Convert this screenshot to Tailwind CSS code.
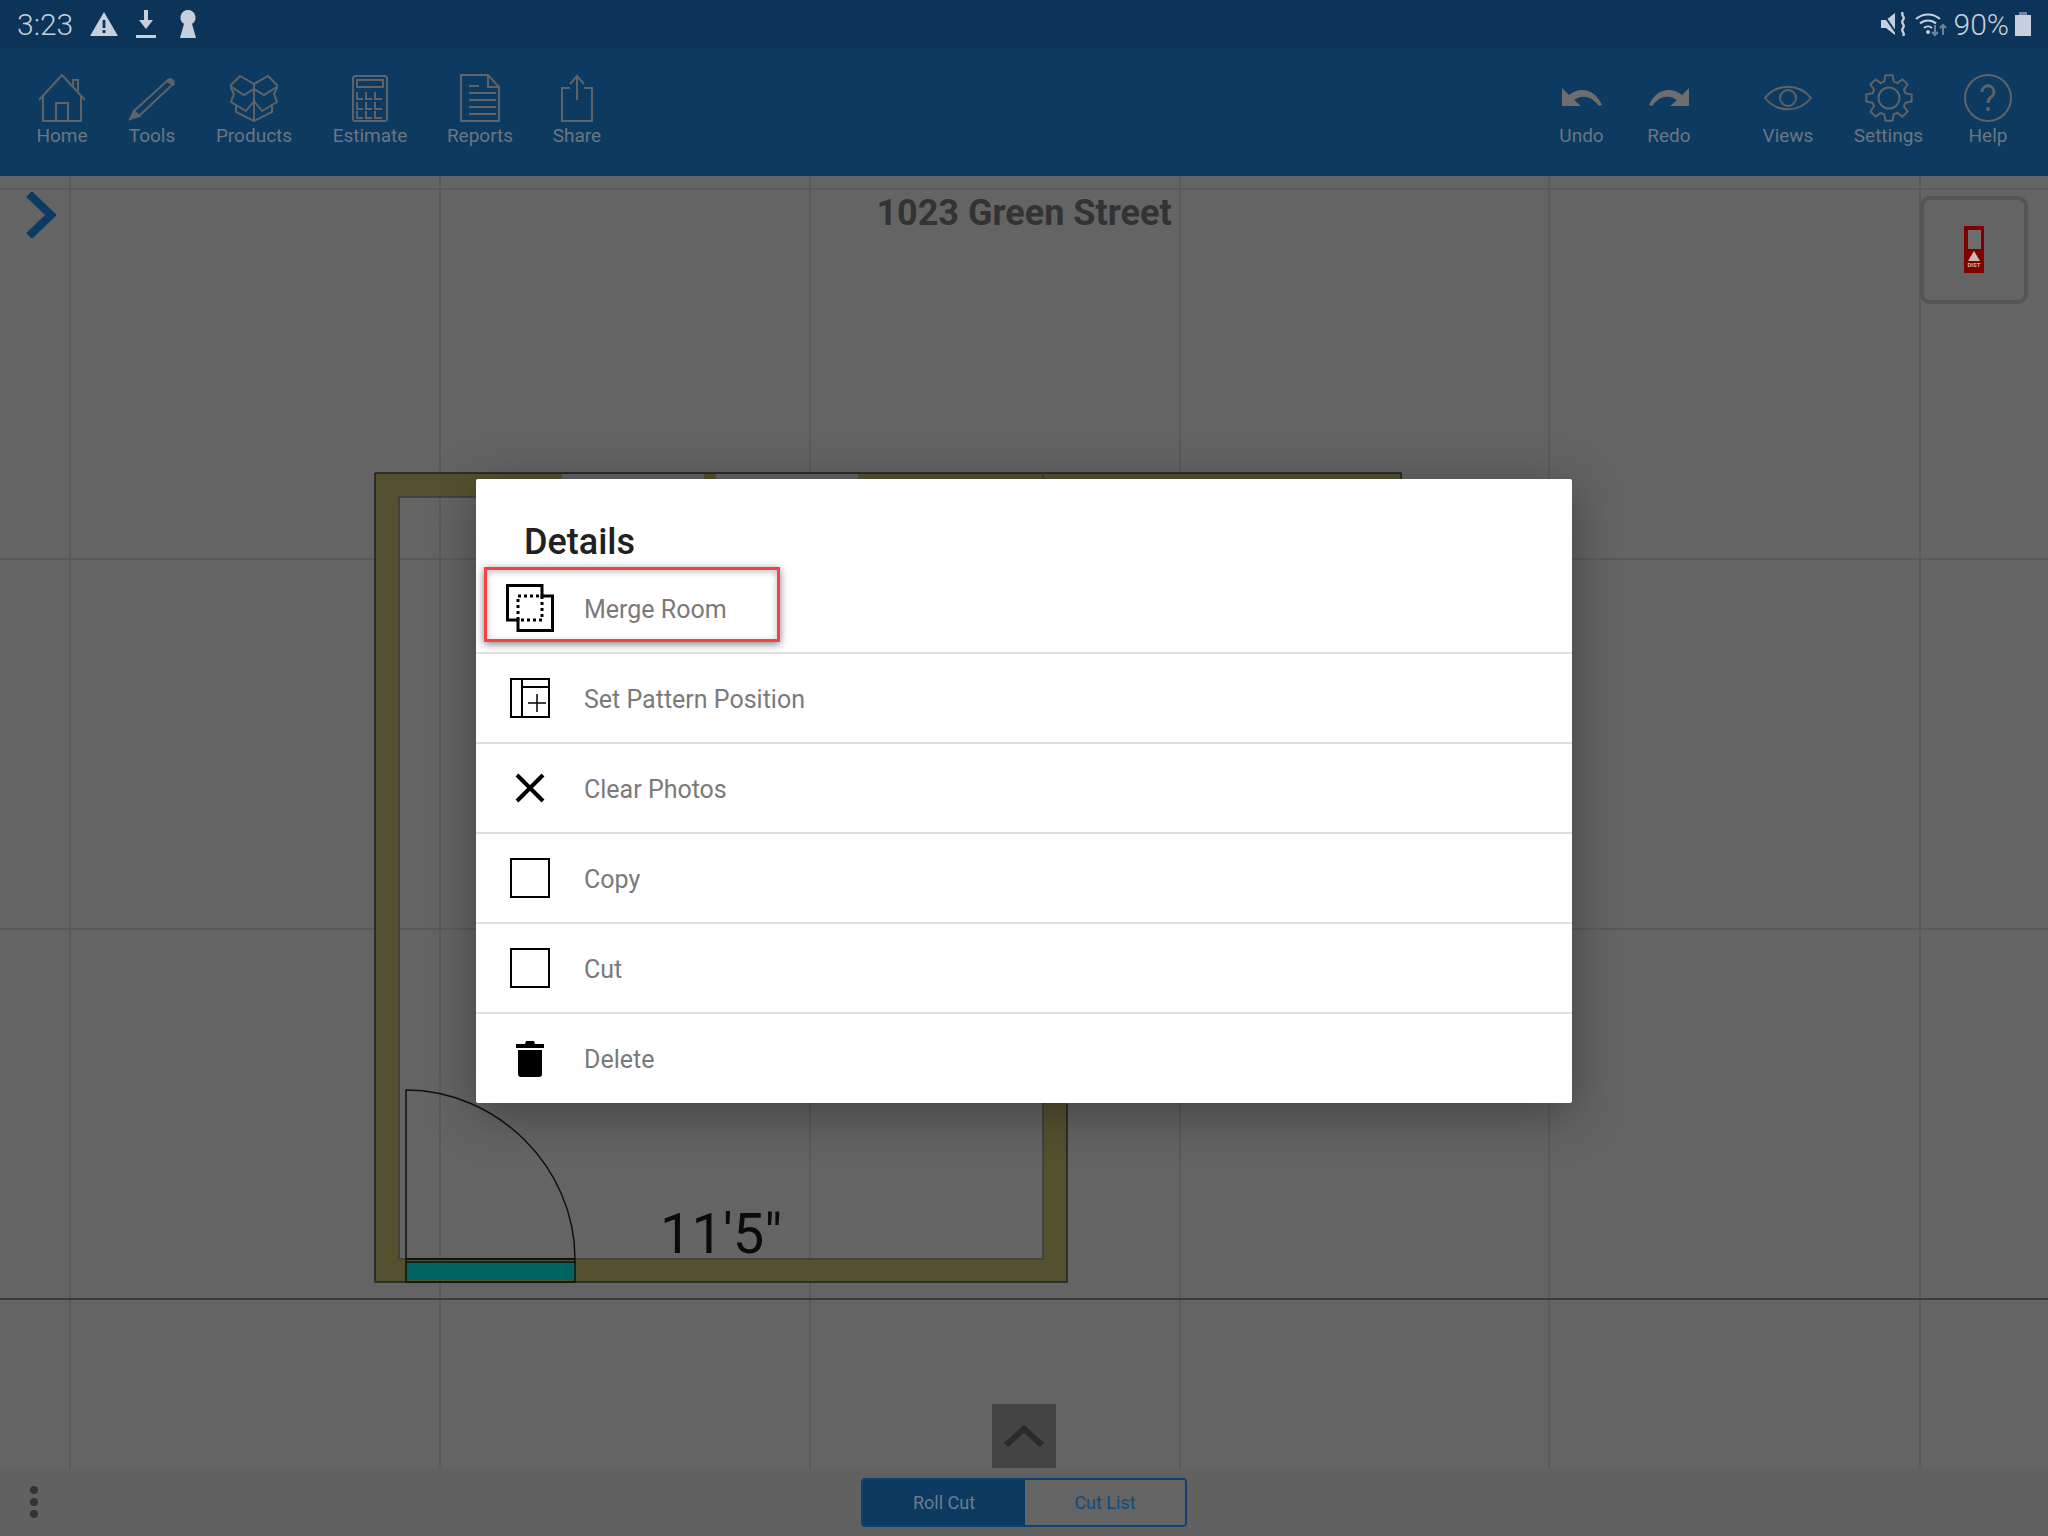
<!DOCTYPE html>
<html lang="en">
<head>
    <meta charset="UTF-8">
    <meta name="viewport" content="width=device-width, initial-scale=1.0">
    <title>1023 Green Street</title>
    <script src="https://cdn.jsdelivr.net/npm/@tailwindcss/browser@4"></script>
</head>
<body class="[font-family:Roboto,sans-serif] bg-[#646464]">
<div class="flex flex-col w-[2048px] h-[1536px] overflow-hidden">

    <!-- status bar -->
    <div class="h-[48px] shrink-0 bg-[#0c3358] flex items-center justify-between pl-[17px] pr-[17px] text-[#c5d0dc]">
        <div class="flex items-center">
            <span class="text-[30px] font-light w-[73px]">3:23</span>
            <svg class="w-[28px] h-[24px]" viewBox="0 0 28 24"><path fill-rule="evenodd" fill="#c5d0dc" d="M14 0 28 24H0ZM12.600 8v8h2.800V8ZM12.600 18v3h2.800v-3Z"/></svg>
            <svg class="w-[20px] h-[28px] ml-[18px]" viewBox="0 0 20 28"><path fill="#c5d0dc" d="M8 0h4v10h5l-7 9-7-9h5ZM0 25h20v3H0Z"/></svg>
            <svg class="w-[16px] h-[28px] ml-[24px]" viewBox="0 0 16 28"><path fill="#c5d0dc" d="M8 0a7.500 7.500 0 0 1 4 13.800L16 28H0L4 13.800A7.500 7.500 0 0 1 8 0Z"/></svg>
        </div>
        <div class="flex items-center">
            <svg class="w-[26px] h-[24px]" viewBox="0 0 26 24"><path fill="#c5d0dc" d="M0 8h5l9-7v22l-9-7H0Z"/><path fill="none" stroke="#0c3358" stroke-width="2" d="M2 2l14 20"/><path fill="none" stroke="#c5d0dc" stroke-width="2.400" d="M22 0c-3 3 3 5 0 8s3 5 0 8 3 5 0 8"/></svg>
            <svg class="w-[32px] h-[26px] ml-[8px]" viewBox="0 0 32 26"><g fill="none" stroke="#c5d0dc" stroke-width="2"><path d="M1 8a18 18 0 0 1 24 0"/><path d="M5 12.500a12 12 0 0 1 16 0"/><path d="M9 17a6 6 0 0 1 8 0"/></g><circle cx="13" cy="21" r="2" fill="#c5d0dc"/><path fill="none" stroke="#6f8299" stroke-width="2" d="M20 14v10m-3-3 3 3 3-3M28 24V14m-3 3 3-3 3 3"/></svg>
            <span class="text-[30px] font-light ml-[7px]">90%</span>
            <svg class="w-[16px] h-[24px] ml-[6px]" viewBox="0 0 16 24"><path fill="#c5d0dc" d="M0 3h16v21H0Z"/><path fill="#6f8299" d="M4 0h8v3H4Z"/></svg>
        </div>
    </div>

    <!-- toolbar -->
    <div class="h-[128px] shrink-0 bg-[#0c3a60] flex justify-between pt-[26px] pl-[17px] pr-[20px] text-[19px] leading-[24px] text-[#6c7580]">
        <div class="flex">
            <div class="flex flex-col items-center w-[90px]">
                <svg class="w-[48px] h-[48px]" viewBox="0 0 48 48" fill="none" stroke="#5f6266" stroke-width="2"><path d="M1 26 24 1l23 25M5 22v25h38V22"/><path d="M35 12V6h5v11"/><path d="M18 47V29h12v18"/></svg>
                <span class="mt-[2px]">Home</span>
            </div>
            <div class="flex flex-col items-center w-[90px]">
                <svg class="w-[48px] h-[48px]" viewBox="0 0 48 48" fill="none" stroke="#5f6266" stroke-width="2"><path d="M6 37 40 6l5 4-34 32Z"/><path fill="#5f6266" d="M6 37l5 5-9 3Z"/><path fill="#5f6266" d="M40 6a4 4 0 0 1 6 4l-1 1-6-4Z"/></svg>
                <span class="mt-[2px]">Tools</span>
            </div>
            <div class="flex flex-col items-center w-[114px]">
                <svg class="w-[48px] h-[48px]" viewBox="0 0 48 48" fill="none" stroke="#5f6266" stroke-width="2"><path d="M24 10 10 2 0 12l14 9 10-6 10 6 14-9L38 2Z"/><path d="M24 10v37M0 12l4 8-3 8 15 9 8-10 8 10 15-9-3-8 4-8"/><path d="M6 32v6l18 9 18-9v-6M24 27V15"/></svg>
                <span class="mt-[2px]">Products</span>
            </div>
            <div class="flex flex-col items-center w-[118px]">
                <svg class="w-[48px] h-[48px]" viewBox="0 0 48 48" fill="none" stroke="#5f6266" stroke-width="2"><rect x="7" y="2" width="34" height="45" rx="2.500"/><rect x="11" y="6" width="26" height="7"/><path d="M11 18v7h6M20 18v7h6M29 18v7h7M11 28v7h6M20 28v7h6M29 28v7h7M11 37v7h6M20 37v7h6M29 37v7h7"/></svg>
                <span class="mt-[2px]">Estimate</span>
            </div>
            <div class="flex flex-col items-center w-[102px]">
                <svg class="w-[48px] h-[48px]" viewBox="0 0 48 48" fill="none" stroke="#5f6266" stroke-width="2"><path d="M5 1h27l11 12v34H5ZM32 1v12h11"/><path d="M13 12h10M13 19h27M13 26h27M13 33h27M13 40h27"/></svg>
                <span class="mt-[2px]">Reports</span>
            </div>
            <div class="flex flex-col items-center w-[92px]">
                <svg class="w-[48px] h-[48px]" viewBox="0 0 48 48" fill="none" stroke="#5f6266" stroke-width="2"><path d="M17 14H9v33h30V14h-8"/><path d="M24 26V1m-7 9 7-8 7 8"/></svg>
                <span class="mt-[2px]">Share</span>
            </div>
        </div>
        <div class="flex">
            <div class="flex flex-col items-center w-[91px]">
                <svg class="w-[48px] h-[48px]" viewBox="0 0 48 48"><path fill="#6e6e6e" d="M4 14V32H23L16 26C24 20 34 22 41 32L44 31C37 15 22 12 11 21Z"/></svg>
                <span class="mt-[2px]">Undo</span>
            </div>
            <div class="flex flex-col items-center w-[84px] mr-[36px]">
                <svg class="w-[48px] h-[48px]" viewBox="0 0 48 48"><path fill="#6e6e6e" d="M44 14V32H25L32 26C24 20 14 22 7 32L4 31C11 15 26 12 37 21Z"/></svg>
                <span class="mt-[2px]">Redo</span>
            </div>
            <div class="flex flex-col items-center w-[82px]">
                <svg class="w-[48px] h-[48px]" viewBox="0 0 48 48" fill="none" stroke="#5f6266" stroke-width="2"><path d="M1 24C13 9 35 9 47 24 35 39 13 39 1 24Z"/><circle cx="24" cy="24" r="8"/></svg>
                <span class="mt-[2px]">Views</span>
            </div>
            <div class="flex flex-col items-center w-[119px]">
                <svg class="w-[48px] h-[48px]" viewBox="0 0 48 48" fill="none" stroke="#5f6266" stroke-width="2" stroke-linejoin="round"><circle cx="24" cy="24" r="10.500"/><path d="M19.310 7.660 20.400 1.280H27.600L28.690 7.660A17 17 0 0 1 32.240 9.130L37.520 5.390 42.610 10.480 38.870 15.760A17 17 0 0 1 40.340 19.310L46.720 20.400V27.600L40.340 28.690A17 17 0 0 1 38.870 32.240L42.610 37.520 37.520 42.610 32.240 38.870A17 17 0 0 1 28.690 40.340L27.600 46.720H20.400L19.310 40.340A17 17 0 0 1 15.760 38.870L10.480 42.610 5.390 37.520 9.130 32.240A17 17 0 0 1 7.660 28.690L1.280 27.600V20.400L7.660 19.310A17 17 0 0 1 9.130 15.760L5.390 10.480 10.480 5.390 15.760 9.130A17 17 0 0 1 19.310 7.660Z"/></svg>
                <span class="mt-[2px]">Settings</span>
            </div>
            <div class="flex flex-col items-center w-[80px]">
                <svg class="w-[48px] h-[48px]" viewBox="0 0 48 48" fill="none" stroke="#5f6266" stroke-width="2"><circle cx="24" cy="24" r="23"/><path stroke-width="3" d="M18 18a6 6 0 1 1 9 5c-2 1.500-3 3-3 6"/><path stroke-width="3" d="M24 33v4"/></svg>
                <span class="mt-[2px]">Help</span>
            </div>
        </div>
    </div>

    <!-- canvas -->
    <div class="relative flex-1">
        <svg class="absolute inset-0 w-full h-full" viewBox="0 176 2048 1292">
            <g stroke="#5a5a5a" stroke-width="2">
                <path d="M70 176v1292M440 176v1292M810 176v1292M1180 176v1292M1549 176v1292M1920 176v1292"/>
                <path d="M0 189h2048M0 559h2048M0 929h2048"/>
            </g>
            <path stroke="#3a3a3a" stroke-width="2" d="M0 1299h2048"/>

            <!-- walls -->
            <path fill="#55512f" d="M375 473H1401V497H1067V1282H375ZM399 497V1259H1043V497Z" fill-rule="evenodd"/>
            <path fill="#646464" d="M562 474h142v23H562ZM716 474h142v23H716Z"/>
            <g fill="none">
                <path stroke="#1f1f1f" stroke-width="1.500" d="M375 473H1401V497M375 473V1282H1067V1104"/>
                <path stroke="#3b3b3b" stroke-width="1.500" d="M1043 473V1259H399V497H480"/>
                <path stroke="#4f4b2c" stroke-width="1" d="M375 1282l24-23"/>
            </g>

            <!-- door -->
            <rect x="406" y="1262" width="169" height="18" fill="#006462"/>
            <g fill="none" stroke="#111" stroke-width="1.500">
                <path d="M406 1282V1090C497 1090 575 1167 575 1259V1282ZM406 1262H575"/>
            </g>
            <path stroke="#111" stroke-width="2" d="M406 1259H575"/>

            <text x="660" y="1253" font-size="56" fill="#0a0a0a" font-family="Roboto">11'5"</text>
        </svg>

        <!-- canvas overlays -->
        <svg class="absolute left-[26px] top-[16px] w-[30px] h-[46px]" viewBox="0 0 30 46"><path fill="none" stroke="#0c3a62" stroke-width="8" d="M3 2l22 21L3 44"/></svg>
        <div class="absolute inset-x-0 top-[17px] text-center text-[36px] leading-[40px] font-bold text-[#333333]">1023 Green Street</div>
        <div class="absolute right-[20px] top-[20px] w-[108px] h-[108px] flex items-center justify-center border-4 border-[#555555] rounded-[10px]">
            <div class="relative flex flex-col items-center w-[20px] h-[47px] bg-[#800000] pt-[4px] -mt-[2px]">
                <div class="w-[13px] h-[19px] bg-[#6e6e6e]"></div>
                <svg class="w-[12px] h-[10px] mt-[2px]" viewBox="0 0 12 10"><path fill="#c9b9b9" d="M6 0l6 10H0Z"/></svg>
                <span class="text-[6px] leading-[8px] font-bold text-[#c9b9b9]">DIST</span>
            </div>
        </div>

        <!-- details dialog -->
        <div class="absolute left-[476px] top-[303px] w-[1096px] bg-white rounded-[2px] shadow-[0_10px_50px_rgba(0,0,0,0.35)]">
            <div class="h-[85px] pl-[48px] pt-[43px] text-[36px] leading-[40px] font-medium text-[#212121]">Details</div>
            <div class="relative flex items-center h-[90px] border-b-2 border-[#e0e0e0]">
                <svg class="w-[48px] h-[48px] ml-[30px]" viewBox="0 0 48 48" fill="none" stroke="#000"><path stroke-width="3" d="M36 12V1.500H1.500V36H12v10.500h34.500V12Z"/><path stroke-width="3" stroke-dasharray="3 3" d="M12 12h24v24H12Z"/></svg>
                <span class="ml-[30px] mt-[3px] text-[25px] text-[#7a7a7a]">Merge Room</span>
                <div class="absolute left-[8px] top-[3px] w-[296px] h-[75px] border-[3px] border-[#f44248] shadow-[0_2px_8px_rgba(0,0,0,0.5),inset_0_2px_6px_rgba(0,0,0,0.25)]"></div>
            </div>
            <div class="flex items-center h-[90px] border-b-2 border-[#e0e0e0]">
                <svg class="w-[48px] h-[48px] ml-[30px]" viewBox="0 0 48 48" fill="none" stroke="#000" stroke-width="2"><rect x="5" y="5" width="38" height="38"/><path d="M16 5v38M16 13h27"/><path stroke-width="1.500" d="M22 29h18M31 20v18"/></svg>
                <span class="ml-[30px] mt-[3px] text-[25px] text-[#7a7a7a]">Set Pattern Position</span>
            </div>
            <div class="flex items-center h-[90px] border-b-2 border-[#e0e0e0]">
                <svg class="w-[48px] h-[48px] ml-[30px]" viewBox="0 0 48 48" fill="none" stroke="#000" stroke-width="4"><path d="M11 11l26 26M37 11 11 37"/></svg>
                <span class="ml-[30px] mt-[3px] text-[25px] text-[#7a7a7a]">Clear Photos</span>
            </div>
            <div class="flex items-center h-[90px] border-b-2 border-[#e0e0e0]">
                <svg class="w-[48px] h-[48px] ml-[30px]" viewBox="0 0 48 48" fill="none" stroke="#000" stroke-width="2"><rect x="5" y="5" width="38" height="38"/></svg>
                <span class="ml-[30px] mt-[3px] text-[25px] text-[#7a7a7a]">Copy</span>
            </div>
            <div class="flex items-center h-[90px] border-b-2 border-[#e0e0e0]">
                <svg class="w-[48px] h-[48px] ml-[30px]" viewBox="0 0 48 48" fill="none" stroke="#000" stroke-width="2"><rect x="5" y="5" width="38" height="38"/></svg>
                <span class="ml-[30px] mt-[3px] text-[25px] text-[#7a7a7a]">Cut</span>
            </div>
            <div class="flex items-center h-[89px]">
                <svg class="w-[48px] h-[48px] ml-[30px]" viewBox="0 0 48 48"><path d="M10 9h9l1-3h8l1 3h9v4H10ZM12 15h24v24a3 3 0 0 1-3 3H15a3 3 0 0 1-3-3Z"/></svg>
                <span class="ml-[30px] mt-[3px] text-[25px] text-[#7a7a7a]">Delete</span>
            </div>
        </div>

        <!-- collapse handle -->
        <div class="absolute left-[992px] bottom-0 w-[64px] h-[64px] bg-[#444444] flex items-center justify-center">
            <svg class="w-[40px] h-[24px] mt-[2px]" viewBox="0 0 40 24"><path fill="none" stroke="#2b2b2b" stroke-width="6" d="M2 20 20 4l18 16"/></svg>
        </div>
    </div>

    <!-- bottom bar -->
    <div class="h-[68px] shrink-0 bg-[#616161] relative flex items-center justify-center">
        <div class="absolute left-[30px] top-[18px] flex flex-col gap-[4px]">
            <div class="w-[8px] h-[8px] rounded-full bg-[#333333]"></div>
            <div class="w-[8px] h-[8px] rounded-full bg-[#333333]"></div>
            <div class="w-[8px] h-[8px] rounded-full bg-[#333333]"></div>
        </div>
        <div class="flex w-[326px] h-[49px] border-2 border-[#0e4070] rounded-[4px] overflow-hidden text-[18px]">
            <div class="w-[162px] bg-[#0c3a60] text-[#6c7d8a] flex items-center justify-center">Roll Cut</div>
            <div class="flex-1 bg-[#646464] text-[#124a7a] flex items-center justify-center">Cut List</div>
        </div>
    </div>
</div>
</body>
</html>
